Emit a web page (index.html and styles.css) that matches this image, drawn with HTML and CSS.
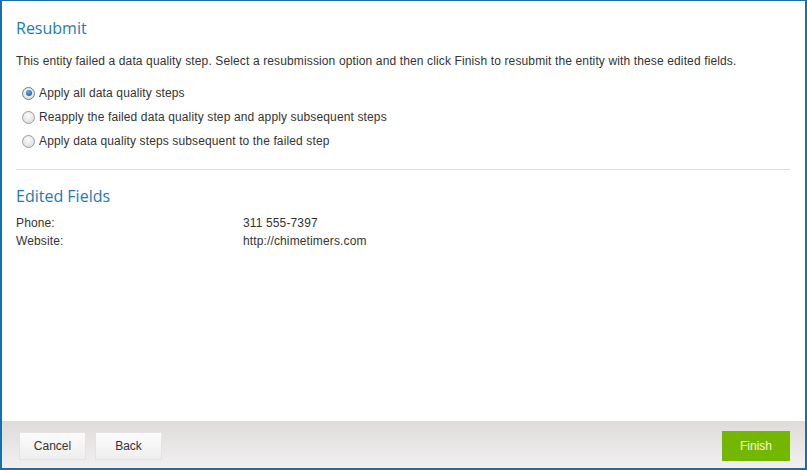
FILE: index.html
```html
<!DOCTYPE html>
<html>
<head>
<meta charset="utf-8">
<link rel="stylesheet" href="styles.css">
</head>
<body>
<div class="dialog">
  <div class="content">
    <h2 class="title">Resubmit</h2>
    <p class="desc">This entity failed a data quality step. Select a resubmission option and then click Finish to resubmit the entity with these edited fields.</p>
    <div class="options">
      <label class="opt"><span class="radio checked"></span>Apply all data quality steps</label>
      <label class="opt"><span class="radio"></span>Reapply the failed data quality step and apply subsequent steps</label>
      <label class="opt"><span class="radio"></span>Apply data quality steps subsequent to the failed step</label>
    </div>
    <hr class="sep">
    <h2 class="title fields-title">Edited Fields</h2>
    <div class="fields">
      <div class="key">Phone:</div><div class="val">311 555-7397</div>
      <div class="key">Website:</div><div class="val">http://chimetimers.com</div>
    </div>
  </div>
  <div class="footer">
    <div class="left">
      <button class="btn">Cancel</button>
      <button class="btn">Back</button>
    </div>
    <button class="btn primary">Finish</button>
  </div>
</div>
</body>
</html>
```

FILE: styles.css
```css
* { box-sizing: border-box; }
html, body { margin: 0; padding: 0; }
body {
  width: 807px;
  height: 470px;
  font-family: "Liberation Sans", Arial, sans-serif;
  font-size: 12px;
  letter-spacing: 0.13px;
  color: #333;
  background: #fff;
}
.dialog {
  width: 807px;
  height: 470px;
  border: 2px solid #1b6ea6;
  border-top-width: 1px;
  display: flex;
  flex-direction: column;
}
.content {
  flex: 1;
  padding: 17px 14px 0 14px;
}
.title {
  margin: 0;
  font-family: "Open Sans", "Noto Sans", sans-serif;
  font-weight: normal;
  font-size: 16px;
  line-height: 20px;
  letter-spacing: 0;
  color: #1d7ab8;
}
.desc {
  margin: 15px 0 0 0;
  line-height: 16px;
}
.options {
  margin-top: 17px;
  display: flex;
  flex-direction: column;
  gap: 10px;
}
.opt {
  display: flex;
  align-items: center;
  line-height: 14px;
  gap: 4px;
  padding-left: 6px;
}
.radio {
  width: 13px;
  height: 13px;
  border-radius: 50%;
  border: 1px solid #9a9a9a;
  background: radial-gradient(circle at 50% 35%, #fbfbfb, #d8d8d8);
  position: relative;
  flex: none;
}
.radio.checked {
  border-color: #6b7f95;
}
.radio.checked::after {
  content: "";
  position: absolute;
  left: 2.5px;
  top: 2.5px;
  width: 6px;
  height: 6px;
  border-radius: 50%;
  background: radial-gradient(circle at 40% 35%, #5ab0ea, #0d4f8f);
}
.sep {
  margin: 21px 0 0 0;
  border: 0;
  border-top: 1px solid #dcdcdc;
  width: 774px;
}
.fields-title {
  margin-top: 16px;
}
.fields {
  margin-top: 8px;
  display: grid;
  grid-template-columns: 227px 1fr;
  line-height: 18px;
}
.footer {
  height: 47px;
  background: linear-gradient(#dfdbdb, #f1f0f0);
  display: flex;
  justify-content: space-between;
  align-items: flex-start;
  padding: 11px 15px 0 17px;
}
.left { display: flex; gap: 9px; }
.btn {
  width: 67px;
  height: 28px;
  border: 1px solid #e4e2e2;
  background: linear-gradient(#fbfbfb, #eeeeee);
  font-family: "Liberation Sans", Arial, sans-serif;
  font-size: 12px;
  color: #333;
  padding: 0;
  margin: 0;
}
.btn.primary {
  width: 68px;
  height: 30px;
  margin-top: -1px;
  background: #74b700;
  border-color: #74b700;
  color: #fafad8;
}
```
